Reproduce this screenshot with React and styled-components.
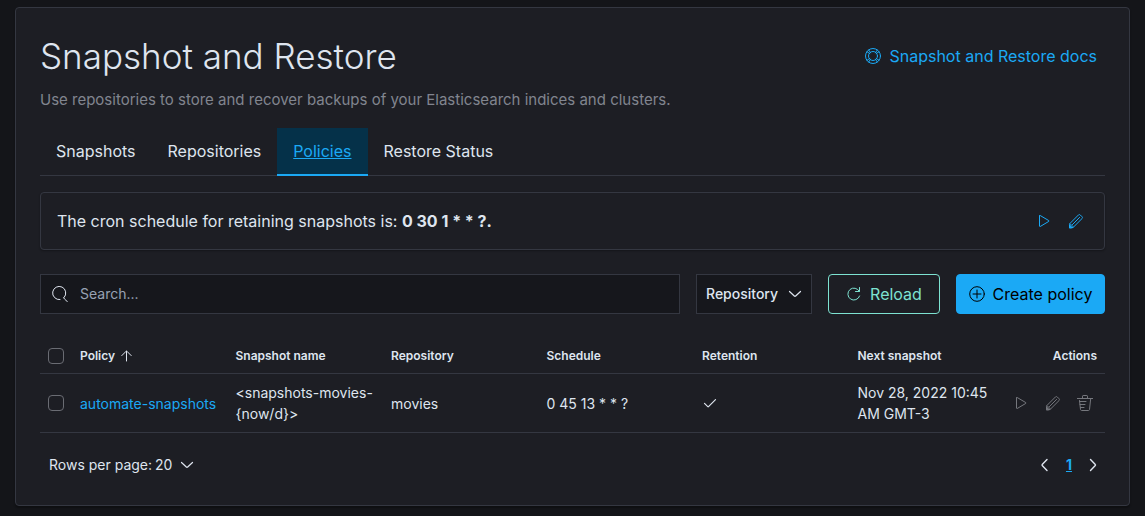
import styled, { createGlobalStyle } from 'styled-components';

const GlobalStyle = createGlobalStyle`
  * {
    box-sizing: border-box;
  }

  body {
    margin: 0;
    background-color: #141519;
    color: #dfe5ef;
    font-family: 'Inter', sans-serif;
    font-size: 16px;
    line-height: 24px;
  }

  button, input, select {
    margin: 0;
    padding: 0;
    border: 0;
    background: none;
    color: inherit;
    font: inherit;
  }

  button, select {
    cursor: pointer;
  }
`;

const Page = styled.main`
  padding: 7px 15px;
`;

const Panel = styled.section`
  padding: 24px;
  background-color: #1d1e24;
  border: 1px solid #343741;
  border-radius: 4px;
  box-shadow: 0 2px 2px rgba(0, 0, 0, 0.3);
`;

const Header = styled.header`
  display: flex;
  justify-content: space-between;
  align-items: center;
`;

const Title = styled.h1`
  margin: 0;
  font-size: 35px;
  font-weight: 300;
  line-height: 48px;
`;

const DocsLink = styled.a`
  display: flex;
  align-items: center;
  gap: 8px;
  padding: 0 8px;
  color: #1ba9f5;
  text-decoration: none;
`;

const Description = styled.p`
  margin: 8px 0 16px;
  color: #81858f;
  font-size: 15px;
`;

const Tabs = styled.nav`
  display: flex;
  box-shadow: inset 0 -1px 0 #343741;
`;

const Tab = styled.a`
  padding: 11px 16px 13px;
  color: ${({ $active }) => ($active ? '#1ba9f5' : '#dfe5ef')};
  background-color: ${({ $active }) => ($active ? '#053149' : 'transparent')};
  box-shadow: ${({ $active }) => ($active ? 'inset 0 -2px 0 #1ba9f5' : 'none')};
  text-decoration: ${({ $active }) => ($active ? 'underline' : 'none')};
`;

const Retention = styled.div`
  display: flex;
  justify-content: space-between;
  align-items: center;
  margin: 16px 0 24px;
  padding: 12px 12px 12px 16px;
  border: 1px solid #343741;
  border-radius: 4px;
  box-shadow: 0 1px 2px rgba(0, 0, 0, 0.3);
`;

const Schedule = styled.p`
  margin: 0;
`;

const IconGroup = styled.div`
  display: flex;
`;

const IconButton = styled.button`
  display: flex;
  justify-content: center;
  align-items: center;
  width: 32px;
  height: 32px;
  color: ${({ $muted }) => ($muted ? '#75777d' : '#1ba9f5')};
`;

const Toolbar = styled.div`
  display: flex;
  gap: 16px;
  margin-bottom: 24px;
`;

const SearchBox = styled.label`
  display: flex;
  flex: 1;
  align-items: center;
  gap: 12px;
  height: 40px;
  padding: 0 11px;
  background-color: #16171c;
  border: 1px solid #343741;
`;

const SearchInput = styled.input`
  flex: 1;
  outline: none;
  font-size: 14px;

  &::placeholder {
    color: #98a2b3;
    opacity: 1;
  }
`;

const FilterBox = styled.div`
  display: grid;
  align-items: center;
  width: 116px;
  height: 40px;
  padding: 0 8px 0 9px;
  background-color: #16171c;
  border: 1px solid #343741;
`;

const Select = styled.select`
  grid-area: 1 / 1;
  width: 100%;
  padding-right: 16px;
  appearance: none;
  outline: none;
  font-size: 14px;
  font-weight: ${({ $strong }) => ($strong ? 500 : 400)};
`;

const SelectArrow = styled.span`
  display: flex;
  grid-area: 1 / 1;
  justify-self: end;
  pointer-events: none;
`;

const Button = styled.button`
  display: flex;
  justify-content: center;
  align-items: center;
  gap: 8px;
  width: ${({ $fill }) => ($fill ? '149px' : '112px')};
  height: 40px;
  border: 1px solid ${({ $fill }) => ($fill ? '#1ba9f5' : '#7de2d1')};
  border-radius: 4px;
  background-color: ${({ $fill }) => ($fill ? '#1ba9f5' : 'transparent')};
  color: ${({ $fill }) => ($fill ? '#000000' : '#7de2d1')};
  white-space: nowrap;
`;

const Table = styled.table`
  width: 100%;
  table-layout: fixed;
  border-collapse: separate;
  border-spacing: 0;
  font-size: 14px;
  line-height: 21px;
`;

const HeadCell = styled.th`
  width: ${({ $width }) => $width || 'auto'};
  height: 36px;
  padding: 0 8px;
  border-bottom: 1px solid #343741;
  text-align: ${({ $align }) => $align || 'left'};
  font-size: 12px;
  font-weight: 600;
`;

const SortButton = styled.button`
  display: flex;
  align-items: center;
  gap: 4px;
`;

const Cell = styled.td`
  padding: ${({ $tight }) => ($tight ? '8px 0' : '8px')};
  border-bottom: 1px solid #343741;
  vertical-align: middle;
`;

const Checkbox = styled.input`
  display: block;
  width: 16px;
  height: 16px;
  appearance: none;
  border: 1px solid #6a6c73;
  border-radius: 4px;
`;

const PolicyLink = styled.a`
  color: #1ba9f5;
  text-decoration: none;
`;

const Footer = styled.footer`
  display: flex;
  justify-content: space-between;
  align-items: center;
  height: 32px;
  margin-top: 16px;
  padding-left: 9px;
  font-size: 14px;
`;

const PageSize = styled.div`
  display: flex;
  align-items: center;
  gap: 3px;
`;

const SizeBox = styled.div`
  display: grid;
  align-items: center;
  width: 40px;
`;

const Pagination = styled.nav`
  display: flex;
  align-items: center;
`;

const PageButton = styled.button`
  display: flex;
  justify-content: center;
  align-items: center;
  width: 24px;
  height: 24px;
  color: ${({ $current }) => ($current ? '#1ba9f5' : '#dfe5ef')};
  text-decoration: ${({ $current }) => ($current ? 'underline' : 'none')};
  font-weight: 700;
`;

const Svg = styled.svg`
  display: block;
  flex: none;
`;

const icons = {
  help: (
    <>
      <circle cx="8" cy="8" r="7.5" />
      <circle cx="8" cy="8" r="4.5" />
      <path d="M2 3.7l2.8 1.9M3.7 2l1.9 2.8M12.3 2l-1.9 2.8M14 3.7l-2.8 1.9M2 12.3l2.8-1.9M3.7 14l1.9-2.8M12.3 14l-1.9-2.8M14 12.3l-2.8-1.9" />
    </>
  ),
  play: <path d="M3.5 2.9v10.2c0 .4.4.6.7.4l8.6-5.1c.3-.2.3-.6 0-.8L4.2 2.5c-.3-.2-.7 0-.7.4z" />,
  pencil: (
    <>
      <path d="M1.5 14.5l.3-3.9 8.7-8.7c.5-.5 1.2-.5 1.7 0l1.9 1.9c.5.5.5 1.2 0 1.7l-8.7 8.7z" />
      <path d="M4.4 11.6l7.2-7.2M2.2 10.8l3 3" />
      <path d="M1.5 14.5v-2.6l2.6 2.6z" fill="currentColor" />
    </>
  ),
  search: <path d="M8 13.6a6.6 6.6 0 1 1 4.2-2.2M11.6 11.7l.9 1.3 3 2.8" />,
  arrowDown: <path d="M2.5 5.5l5.1 4.7c.2.2.6.2.8 0l5.1-4.7" />,
  refresh: <path d="M13.5 1.5v4h-4M13.3 5.4A6 6 0 1 0 13.6 10" />,
  plus: (
    <>
      <circle cx="8" cy="8" r="7.3" />
      <path d="M8 4v8M4 8h8" />
    </>
  ),
  sortUp: <path d="M7.5 13V3.2M2.8 7.6l4.4-4.4c.2-.2.4-.2.6 0l4.4 4.4" />,
  check: <path d="M2.5 8.4l3.3 3.3c.2.2.5.2.7 0L13.5 4.7" />,
  trash: (
    <path d="M0 3.5h16M5.5 3.5V1.1c0-.3.3-.6.6-.6h3.8c.3 0 .6.3.6.6v2.4M2.5 5.5l1 9c.1.6.5 1 1 1h7c.5 0 .9-.4 1-1l1.2-11M2.5 6.5H9M3 9.5h5M3.5 12.5H7" />
  ),
  left: <path d="M10 2.5 5.2 7.6c-.2.2-.2.6 0 .8l4.8 5.1" />,
  right: <path d="M5.5 2.5l4.8 5.1c.2.2.2.6 0 .8l-4.8 5.1" />,
};

const Icon = ({ name, weight = 1 }) => (
  <Svg
    width="16"
    height="16"
    viewBox="0 0 16 16"
    fill="none"
    stroke="currentColor"
    strokeWidth={weight}
    strokeLinecap="round"
    aria-hidden="true"
  >
    {icons[name]}
  </Svg>
);

const tabs = ['Snapshots', 'Repositories', 'Policies', 'Restore Status'];

const policies = [
  {
    name: 'automate-snapshots',
    snapshot: '<snapshots-movies-{now/d}>',
    repository: 'movies',
    schedule: '0 45 13 * * ?',
    next: 'Nov 28, 2022 10:45 AM GMT-3',
  },
];

const App = () => {
  return (
    <Page>
      <GlobalStyle />
      <Panel>
        <Header>
          <Title>Snapshot and Restore</Title>
          <DocsLink href="#docs">
            <Icon name="help" />
            Snapshot and Restore docs
          </DocsLink>
        </Header>
        <Description>
          Use repositories to store and recover backups of your Elasticsearch indices and clusters.
        </Description>

        <Tabs>
          {tabs.map((tab) => (
            <Tab key={tab} href="#tab" $active={tab === 'Policies'}>
              {tab}
            </Tab>
          ))}
        </Tabs>

        <Retention>
          <Schedule>
            The cron schedule for retaining snapshots is: <strong>0 30 1 * * ?.</strong>
          </Schedule>
          <IconGroup>
            <IconButton aria-label="Run retention">
              <Icon name="play" />
            </IconButton>
            <IconButton aria-label="Edit retention">
              <Icon name="pencil" />
            </IconButton>
          </IconGroup>
        </Retention>

        <Toolbar>
          <SearchBox>
            <Icon name="search" />
            <SearchInput type="search" placeholder="Search..." aria-label="Search policies" />
          </SearchBox>
          <FilterBox>
            <Select $strong aria-label="Repository">
              <option>Repository</option>
            </Select>
            <SelectArrow>
              <Icon name="arrowDown" weight={1.2} />
            </SelectArrow>
          </FilterBox>
          <Button>
            <Icon name="refresh" />
            Reload
          </Button>
          <Button $fill>
            <Icon name="plus" />
            Create policy
          </Button>
        </Toolbar>

        <Table>
          <thead>
            <tr>
              <HeadCell $width="32px">
                <Checkbox type="checkbox" aria-label="Select all policies" />
              </HeadCell>
              <HeadCell>
                <SortButton>
                  Policy
                  <Icon name="sortUp" />
                </SortButton>
              </HeadCell>
              <HeadCell>Snapshot name</HeadCell>
              <HeadCell>Repository</HeadCell>
              <HeadCell>Schedule</HeadCell>
              <HeadCell>Retention</HeadCell>
              <HeadCell>Next snapshot</HeadCell>
              <HeadCell $width="100px" $align="right">
                Actions
              </HeadCell>
            </tr>
          </thead>
          <tbody>
            {policies.map((policy) => (
              <tr key={policy.name}>
                <Cell>
                  <Checkbox type="checkbox" aria-label={`Select ${policy.name}`} />
                </Cell>
                <Cell>
                  <PolicyLink href="#policy">{policy.name}</PolicyLink>
                </Cell>
                <Cell>{policy.snapshot}</Cell>
                <Cell>{policy.repository}</Cell>
                <Cell>{policy.schedule}</Cell>
                <Cell>
                  <Icon name="check" weight={1.2} />
                </Cell>
                <Cell>{policy.next}</Cell>
                <Cell $tight>
                  <IconGroup>
                    <IconButton $muted aria-label="Run policy">
                      <Icon name="play" />
                    </IconButton>
                    <IconButton $muted aria-label="Edit policy">
                      <Icon name="pencil" />
                    </IconButton>
                    <IconButton $muted aria-label="Delete policy">
                      <Icon name="trash" />
                    </IconButton>
                  </IconGroup>
                </Cell>
              </tr>
            ))}
          </tbody>
        </Table>

        <Footer>
          <PageSize>
            <label htmlFor="page-size">Rows per page:</label>
            <SizeBox>
              <Select id="page-size">
                <option>20</option>
              </Select>
              <SelectArrow>
                <Icon name="arrowDown" weight={1.2} />
              </SelectArrow>
            </SizeBox>
          </PageSize>
          <Pagination aria-label="Pages">
            <PageButton aria-label="Previous page">
              <Icon name="left" weight={1.4} />
            </PageButton>
            <PageButton $current>1</PageButton>
            <PageButton aria-label="Next page">
              <Icon name="right" weight={1.4} />
            </PageButton>
          </Pagination>
        </Footer>
      </Panel>
    </Page>
  );
};

export default App;
